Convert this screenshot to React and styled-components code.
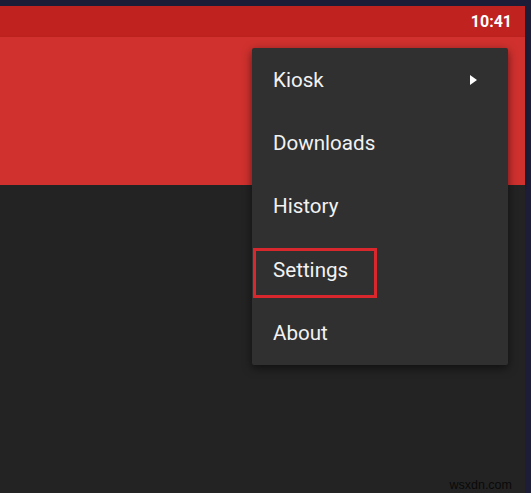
import React from "react";
import styled, { createGlobalStyle } from "styled-components";

const Global = createGlobalStyle`
  html, body {
    margin: 0;
    padding: 0;
    background: #1d1d38;
  }
  body {
    font-family: Roboto, "Noto Sans", sans-serif;
  }
`;

const Frame = styled.div`
  position: relative;
  width: 531px;
  height: 493px;
  box-sizing: border-box;
  padding: 6px 6px 0 0;
  background: #1d1d38;
  display: flex;
  overflow: hidden;
`;

const Screen = styled.div`
  position: relative;
  flex: 1;
  display: flex;
  flex-direction: column;
  background: #232323;
`;

const StatusBar = styled.div`
  height: 31px;
  background: #c0221f;
  display: flex;
  align-items: center;
  justify-content: flex-end;
  padding-right: 13px;
  color: #ffffff;
  font-size: 16px;
  font-weight: 700;
`;

const Toolbar = styled.div`
  height: 148px;
  background: #d0312e;
  box-shadow: 0 2px 3px rgba(0, 0, 0, 0.45);
`;

const Content = styled.div`
  flex: 1;
  background: #232323;
`;

const Menu = styled.ul`
  position: absolute;
  top: 42px;
  right: 17px;
  width: 256px;
  margin: 0;
  padding: 0;
  list-style: none;
  background: #303030;
  border-radius: 2px;
  box-shadow: 0 3px 10px rgba(0, 0, 0, 0.55);
`;

const Item = styled.li`
  position: relative;
  height: 63.4px;
  display: flex;
  align-items: center;
  justify-content: space-between;
  padding: 0 31px 0 21px;
  color: #f2f2f2;
  font-size: 20.6px;
`;

const Highlight = styled.span`
  position: absolute;
  left: 1px;
  top: 10px;
  width: 124px;
  height: 50px;
  box-sizing: border-box;
  border: 3px solid #d9272e;
`;

const Arrow = styled.span`
  width: 0;
  height: 0;
  border-top: 5.5px solid transparent;
  border-bottom: 5.5px solid transparent;
  border-left: 7px solid #ffffff;
`;

const Watermark = styled.span`
  position: absolute;
  right: 19px;
  bottom: 1px;
  font-family: "Liberation Sans", Arial, sans-serif;
  font-size: 12.5px;
  color: #0a0a0a;
`;

const items = [
  { label: "Kiosk", sub: true },
  { label: "Downloads" },
  { label: "History" },
  { label: "Settings", marked: true },
  { label: "About" },
];

export default function App() {
  return (
    <>
      <Global />
      <Frame>
        <Screen>
          <StatusBar>10:41</StatusBar>
          <Toolbar />
          <Content />
          <Menu>
            {items.map((it) => (
              <Item key={it.label}>
                {it.marked && <Highlight />}
                <span>{it.label}</span>
                {it.sub && <Arrow />}
              </Item>
            ))}
          </Menu>
        </Screen>
        <Watermark>wsxdn.com</Watermark>
      </Frame>
    </>
  );
}
